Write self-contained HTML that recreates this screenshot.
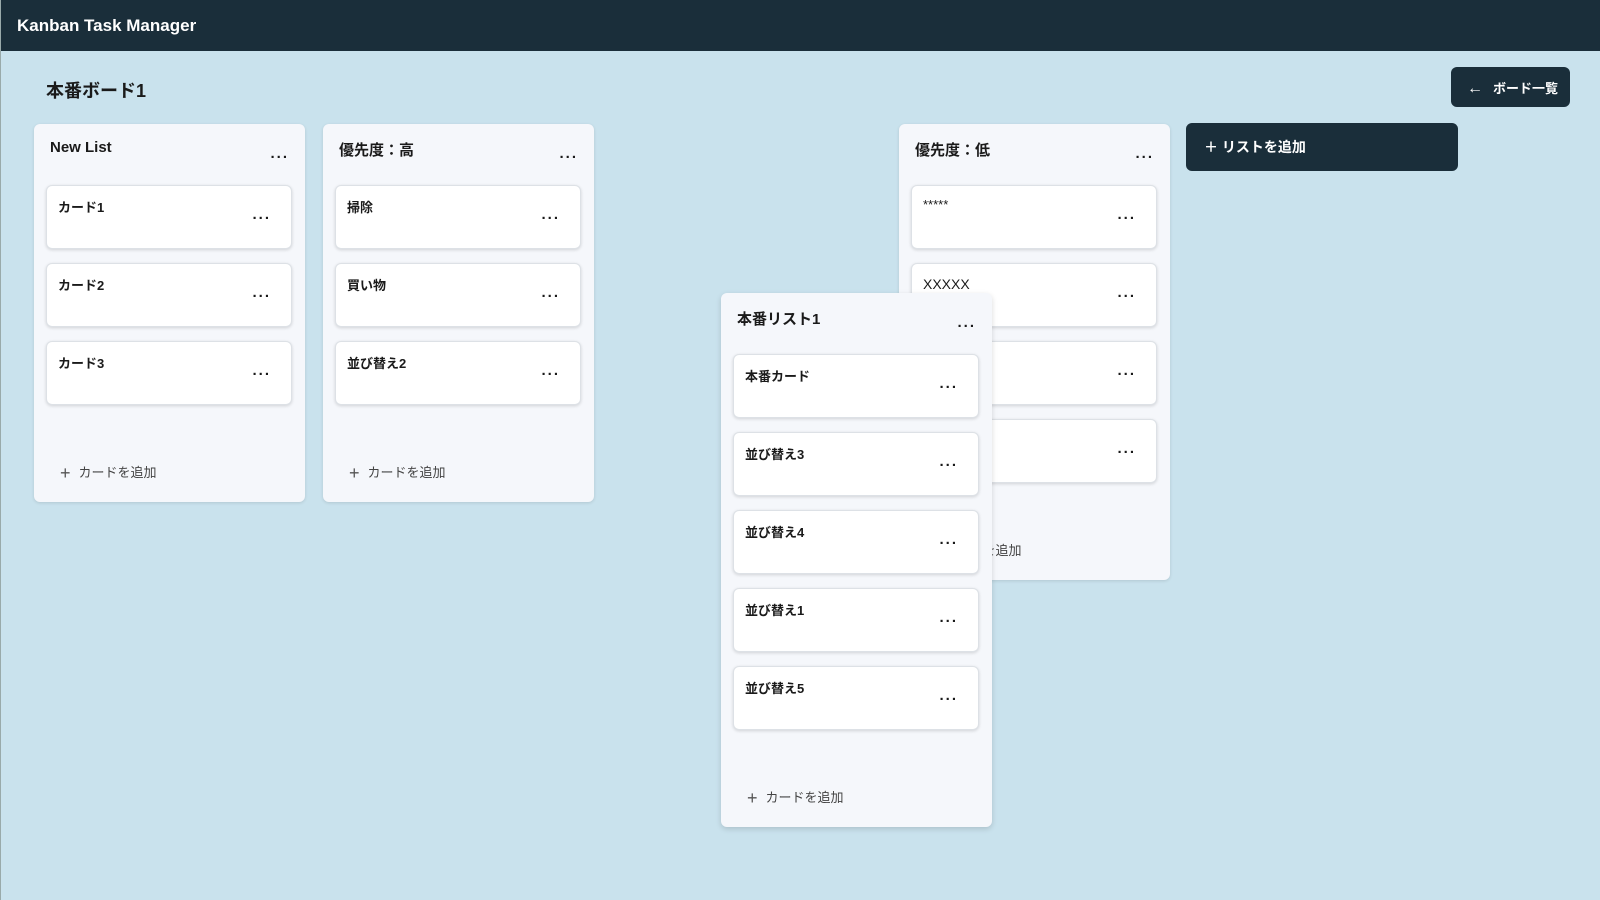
<!DOCTYPE html>
<html><head><meta charset="utf-8"><style>
*{box-sizing:border-box;margin:0;padding:0}
body{width:1600px;height:900px;overflow:hidden;background:#c9e2ed;font-family:"Liberation Sans","Noto Sans CJK JP",sans-serif;color:#1a1a1a;position:relative;border-left:1px solid #9aa;}
.hdr{position:absolute;left:0;top:0;width:1600px;height:51px;background:#1a2e3a;color:#fff;font-size:17px;font-weight:bold;padding:16px 0 0 16px}
.title{position:absolute;left:45px;top:77px;font-size:18px;font-weight:bold}
.back{position:absolute;left:1450px;top:67px;width:119px;height:40px;background:#1a2e3a;border-radius:6px;color:#fff;font-size:13px;font-weight:bold;padding:11px 0 0 16px}
.back span{font-size:16px;font-weight:normal;margin-right:10px}
.addlist{position:absolute;left:1185px;top:123px;width:272px;height:48px;background:#1a2e3a;border-radius:6px;color:#fff;font-size:14px;font-weight:bold;padding:14px 0 0 18px}
.list{position:absolute;width:271px;background:#f5f7fb;border-radius:6px;box-shadow:0 1px 3px rgba(0,0,0,.12)}
.lt{position:absolute;left:16px;top:15px;font-size:15px;font-weight:bold}
.dots{position:absolute;font-size:15px;font-weight:bold;letter-spacing:2px;line-height:10px}
.card{position:absolute;left:12px;width:246px;height:64px;background:#fff;border:1px solid #dde1e6;border-radius:6px;box-shadow:0 1px 3px rgba(0,0,0,.15)}
.card .t{position:absolute;left:11px;top:11px;font-size:13px;font-weight:bold}
.card .dots{right:20px;top:24px}
.add{position:absolute;left:26px;font-size:13px;color:#444}
.add b{font-weight:normal;font-size:18px;margin-right:8px;color:#555;vertical-align:-2px}
</style></head><body>
<div class="hdr">Kanban Task Manager</div>
<div class="title">本番ボード1</div>
<div class="back"><span>←</span>ボード一覧</div>
<div class="addlist">＋&nbsp;リストを追加</div>

<div class="list" style="left:33px;top:124px;height:378px">
<div class="lt">New List</div><div class="dots" style="right:16px;top:25px">...</div>
<div class="card" style="top:61px"><div class="t">カード1</div><div class="dots">...</div></div>
<div class="card" style="top:139px"><div class="t">カード2</div><div class="dots">...</div></div>
<div class="card" style="top:217px"><div class="t">カード3</div><div class="dots">...</div></div>
<div class="add" style="top:338px"><b>+</b>カードを追加</div>
</div>

<div class="list" style="left:322px;top:124px;height:378px">
<div class="lt">優先度：高</div><div class="dots" style="right:16px;top:25px">...</div>
<div class="card" style="top:61px"><div class="t">掃除</div><div class="dots">...</div></div>
<div class="card" style="top:139px"><div class="t">買い物</div><div class="dots">...</div></div>
<div class="card" style="top:217px"><div class="t">並び替え2</div><div class="dots">...</div></div>
<div class="add" style="top:338px"><b>+</b>カードを追加</div>
</div>

<div class="list" style="left:898px;top:124px;height:456px">
<div class="lt">優先度：低</div><div class="dots" style="right:16px;top:25px">...</div>
<div class="card" style="top:61px"><div class="t" style="font-weight:normal">*****</div><div class="dots">...</div></div>
<div class="card" style="top:139px"><div class="t" style="font-weight:normal;top:12px;font-size:14px">XXXXX</div><div class="dots">...</div></div>
<div class="card" style="top:217px"><div class="dots">...</div></div>
<div class="card" style="top:295px"><div class="dots">...</div></div>
<div class="add" style="top:416px"><b>+</b>カードを追加</div>
</div>

<div class="list" style="left:720px;top:293px;height:534px;box-shadow:0 2px 6px rgba(0,0,0,.15)">
<div class="lt">本番リスト1</div><div class="dots" style="right:16px;top:25px">...</div>
<div class="card" style="top:61px"><div class="t">本番カード</div><div class="dots">...</div></div>
<div class="card" style="top:139px"><div class="t">並び替え3</div><div class="dots">...</div></div>
<div class="card" style="top:217px"><div class="t">並び替え4</div><div class="dots">...</div></div>
<div class="card" style="top:295px"><div class="t">並び替え1</div><div class="dots">...</div></div>
<div class="card" style="top:373px"><div class="t">並び替え5</div><div class="dots">...</div></div>
<div class="add" style="top:494px"><b>+</b>カードを追加</div>
</div>
</body></html>
